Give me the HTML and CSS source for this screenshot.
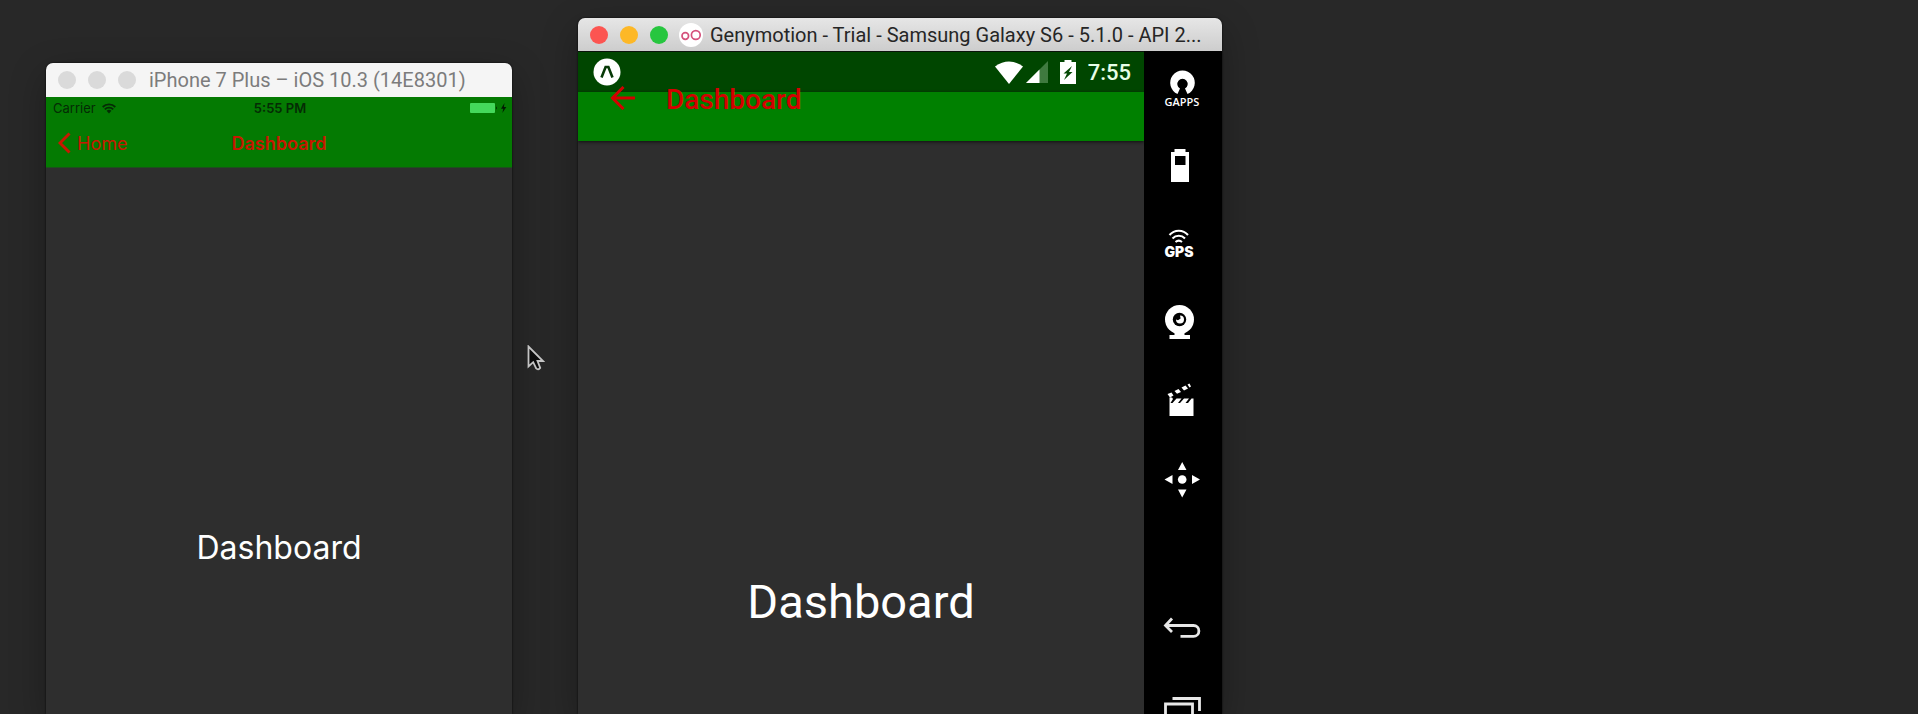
FILE: index.html
```html
<!DOCTYPE html>
<html lang="en">
<head>
<meta charset="utf-8">
<title>Simulators</title>
<link rel="stylesheet" href="styles.css">
</head>
<body>
<main class="desktop">
  <section class="window iphone" aria-label="iPhone simulator">
    <header class="titlebar titlebar-inactive">
      <span class="lights">
        <button class="light" aria-label="Close"></button>
        <button class="light" aria-label="Minimize"></button>
        <button class="light" aria-label="Zoom"></button>
      </span>
      <h1 class="iphone-title">iPhone 7 Plus – iOS 10.3 (14E8301)</h1>
    </header>
    <div class="ios-top">
      <div class="ios-status">
        <span class="carrier">Carrier
          <svg width="14" height="11" viewBox="0 0 14 11" fill="none" stroke="#052b05" stroke-width="1.8"><path d="M.7 4a9 9 0 0 1 12.6 0M2.8 6.3a6 6 0 0 1 8.4 0"/><path d="M4.6 7.8a3.6 3.6 0 0 1 4.800 0L7 10.600z" fill="#052b05" stroke="none"/></svg>
        </span>
        <span class="ios-time">5:55 PM</span>
        <span class="ios-battery">
          <svg width="37" height="12" viewBox="0 0 37 12"><rect x="0" y="1" width="25" height="10" rx="1" fill="#44d95b"/><path d="M26 4.500q2 1.500 0 3z" fill="#052b05"/><path d="M34.500 1 31 6.700h2.300L32.300 11 36.300 5h-2.400z" fill="#031a03"/></svg>
        </span>
      </div>
      <nav class="ios-nav">
        <button class="ios-back">
          <svg width="13" height="22" viewBox="0 0 13 22" fill="none" stroke="#c81800" stroke-width="3"><path d="M11.500 1.500 2 11l9.500 9.500"/></svg>
          Home
        </button>
        <h2 class="ios-heading">Dashboard</h2>
      </nav>
    </div>
    <div class="ios-body"><p class="ios-label">Dashboard</p></div>
  </section>

  <section class="window geny" aria-label="Android emulator">
    <header class="titlebar titlebar-active">
      <span class="lights">
        <button class="light red" aria-label="Close"></button>
        <button class="light yellow" aria-label="Minimize"></button>
        <button class="light green" aria-label="Zoom"></button>
      </span>
      <svg class="geny-logo" width="24" height="24" viewBox="0 0 24 24"><circle cx="12" cy="12" r="12" fill="#fff"/><g fill="none" stroke="#d5527c" stroke-width="1.700"><circle cx="6.300" cy="13" r="3.300"/><circle cx="16.800" cy="12" r="4.400"/></g></svg>
      <h1 class="geny-title">Genymotion - Trial - Samsung Galaxy S6 - 5.1.0 - API 2...</h1>
    </header>
    <div class="geny-main">
      <div class="android">
        <div class="android-status">
          <svg width="28" height="28" viewBox="0 0 28 28"><circle cx="14" cy="14" r="13.500" fill="#fff"/><path d="M8.500 19.500 12.600 9h2.800l4.100 10.500" fill="none" stroke="#083a08" stroke-width="2.600"/></svg>
          <div class="android-icons">
            <svg width="28" height="23" viewBox="0 0 28 23"><path d="M0 5.500Q14-4.500 28 5.500L14 23z" fill="#fff"/></svg>
            <svg width="22" height="22" viewBox="0 0 22 22"><path d="M22 0v22H0z" fill="#3f7a3f"/><path d="M13.500 8.500V22H0z" fill="#fff"/></svg>
            <svg width="16" height="24" viewBox="0 0 16 24"><path d="M4.500 0h7v2H16v22H0V2h4.500z" fill="#fff"/><path d="M12 6 3.500 13.500H7L4 20l8.500-8H9z" fill="#064a06"/></svg>
            <span class="android-time">7:55</span>
          </div>
        </div>
        <nav class="android-bar">
          <button class="android-back" aria-label="Back"><svg width="26" height="24" viewBox="0 0 26 24" fill="none" stroke="#d40000" stroke-width="3"><path d="M25 12H2M13.500 1 2.500 12l11 11"/></svg></button>
          <h2 class="android-heading">Dashboard</h2>
        </nav>
        <div class="android-body"><p class="android-label">Dashboard</p></div>
      </div>
      <aside class="tools">
        <button class="tool" aria-label="Open GAPPS"><svg width="78" height="78" viewBox="0 0 78 78"><path d="M33.500 43A12.300 12.300 0 1 1 43.500 43L41 37.500a5.200 5.200 0 1 0-5 0z" fill="#fff"/><circle cx="38.500" cy="34" r="3" fill="#000"/><text class="gapps-text" x="38" y="55">GAPPS</text></svg></button>
        <button class="tool" aria-label="Battery"><svg width="78" height="78" viewBox="0 0 78 78"><path d="M30.500 20h11v3H45v30H27V23h3.500z" fill="#fff"/><path d="M31 27h10.500v9H31z" fill="#000"/></svg></button>
        <button class="tool" aria-label="GPS"><svg width="78" height="78" viewBox="0 0 78 78"><g fill="none" stroke="#fff" stroke-width="2"><path d="M25.500 28a12 12 0 0 1 18.500 0M28.500 31.500a8.500 8.500 0 0 1 12.500 0M31.500 35a5 5 0 0 1 6.500 0"/></g><text class="gps-text" x="35" y="50">GPS</text></svg></button>
        <button class="tool" aria-label="Camera"><svg width="78" height="78" viewBox="0 0 78 78"><circle cx="35.500" cy="34.500" r="14.500" fill="#fff"/><circle cx="35.500" cy="34.500" r="6.700" fill="#000"/><path d="M36 30.500a4 4 0 1 1-4 4l2 .8 2.600-1.800z" fill="#fff"/><path d="M30.500 47h10v3H46v4H25.500v-4h5z" fill="#fff"/></svg></button>
        <button class="tool" aria-label="Capture"><svg width="78" height="78" viewBox="0 0 78 78"><path d="M25.500 40h24v13h-24z" fill="#fff"/><g fill="#fff"><path d="M25.500 34.500h2.500l1 1.500-2.500 4h-1zM32.500 35.500h5L34 40h-5.500zM40 35.500h5L41.500 40H36zM47.500 35.500h2V40H44zM23.500 31l4-1.500 2 3-3.500 2zM30.500 28l4-2 2.500 3-4 1.800zM37.500 24.500l4-2 2.500 3-4 2zM43.500 21.500l2-1 1.500 3-1.500 1z"/></g></svg></button>
        <button class="tool" aria-label="Move"><svg width="78" height="78" viewBox="0 0 78 78" fill="#fff"><circle cx="38.200" cy="38.500" r="4.300"/><path d="M38.200 21 42.500 29H34zM38.200 56.500 34 48.500h8.500zM20.500 38.500l8-4.500v9zM56 38.500l-8-4.500v9z"/></svg></button>
        <button class="tool tool-back" aria-label="Back"><svg width="78" height="78" viewBox="0 0 78 78" fill="none" stroke="#e8e8e8" stroke-width="2.800"><path d="M22 36.500h27.500a5.400 5.400 0 0 1 0 10.800h-13M28 29.500 21.500 36.500l6.500 6.500"/></svg></button>
        <button class="tool" aria-label="Recent apps"><svg width="78" height="78" viewBox="0 0 78 78" fill="none" stroke="#e8e8e8" stroke-width="2.800"><path d="M28.500 31.500h27v12.500M21.500 37h27v19h-27z"/></svg></button>
      </aside>
    </div>
  </section>

  <svg class="cursor" width="18" height="26" viewBox="0 0 18 26"><path d="M1.500 1.500v20l4.700-4.300 3 6.200q2 2 4-.5L10.500 16H16z" fill="#0b0b0b" stroke="#c4c4c4" stroke-width="1.800"/></svg>
</main>
</body>
</html>
```
FILE: styles.css
```css
* {
  box-sizing: border-box;
}

body {
  margin: 0;
  background: #282828;
  font-family: Inter, "Liberation Sans", sans-serif;
}

h1,
h2,
p {
  margin: 0;
  font-weight: 400;
  white-space: nowrap;
}

button {
  padding: 0;
  border: 0;
  background: none;
  font: inherit;
  color: inherit;
}

svg {
  display: block;
  flex: none;
}

.desktop {
  position: relative;
  min-height: 100vh;
  overflow: hidden;
}

/* Windows are placed freely on the desktop and run past its lower edge. */
.window {
  position: absolute;
  bottom: 0;
  display: flex;
  flex-direction: column;
  overflow: hidden;
  border-radius: 7px 7px 0 0;
  background: #2e2e2e;
  box-shadow: 0 0 2px #000, 0 12px 36px rgba(0, 0, 0, 0.3);
}

.iphone {
  top: 63px;
  left: 46px;
  width: 466px;
}

.geny {
  top: 18px;
  left: 578px;
  width: 644px;
}

.titlebar {
  display: flex;
  flex: none;
  align-items: center;
  height: 34px;
  padding-left: 12px;
}

.titlebar-inactive {
  background: #f5f5f5;
  color: #7c7c7c;
}

.titlebar-active {
  height: 33px;
  background: linear-gradient(#e6e6e6, #cdcdcd);
  color: #262626;
}

.lights {
  display: flex;
  gap: 12px;
}

.light {
  width: 18px;
  height: 18px;
  border-radius: 50%;
  background: #dadada;
}

.red {
  background: #fc5551;
}

.yellow {
  background: #fdb827;
}

.green {
  background: #27c63f;
}

.iphone-title {
  margin-left: 13px;
  font-family: Roboto, sans-serif;
  font-size: 20px;
}

.geny-logo {
  margin-left: 11px;
}

.geny-title {
  margin-left: 7px;
  font-family: Roboto, sans-serif;
  font-size: 20px;
}

.ios-top {
  flex: none;
  background: #047a02;
  border-bottom: 1px solid #1c501c;
}

.ios-status {
  display: grid;
  grid-template-columns: 1fr auto 1fr;
  align-items: center;
  height: 22px;
  padding: 0 5px 0 7px;
  font-size: 13px;
  color: #052b05;
}

.carrier {
  display: flex;
  align-items: center;
  gap: 6px;
}

.ios-time {
  font-weight: 600;
}

.ios-battery {
  justify-self: end;
}

.ios-nav {
  display: grid;
  grid-template-columns: 1fr auto 1fr;
  align-items: center;
  height: 48px;
  padding: 0 12px;
  font-size: 18px;
  color: #c81800;
}

.ios-back {
  display: flex;
  align-items: center;
  gap: 6px;
}

.ios-heading {
  font-size: 18px;
  font-weight: 600;
}

.ios-body,
.android-body {
  display: flex;
  flex: 1;
  justify-content: center;
  color: #fff;
}

.ios-body {
  padding-top: 360px;
}

.ios-label {
  font-size: 32px;
  line-height: 40px;
}

.geny-main {
  display: flex;
  flex: 1;
  min-height: 0;
}

.android {
  display: flex;
  flex: 1;
  flex-direction: column;
  font-family: Roboto, sans-serif;
}

.android-status {
  display: flex;
  flex: none;
  align-items: center;
  justify-content: space-between;
  height: 41px;
  padding: 0 13px 0 15px;
  border-top: 1px solid #0a140a;
  background: #004600;
  color: #e8ffe8;
}

.android-icons {
  display: flex;
  align-items: center;
}

.android-icons svg {
  margin-right: 3px;
}

.android-icons svg + svg {
  margin-right: 12px;
}

.android-time {
  font-size: 22px;
  font-weight: 500;
}

.android-bar {
  display: flex;
  flex: none;
  align-items: flex-start;
  height: 49px;
  padding-left: 32px;
  background: #008000;
  box-shadow: 0 1px 3px #111;
  color: #d40000;
}

.android-back,
.android-heading {
  margin-top: -6px;
}

.android-heading {
  margin-left: 30px;
  font-size: 28px;
  font-weight: 500;
  line-height: 28px;
}

.android-body {
  padding-top: 433px;
}

.android-label {
  font-size: 47px;
  line-height: 56px;
}

.tools {
  display: flex;
  flex: none;
  flex-direction: column;
  width: 78px;
  background: #000;
  overflow: hidden;
}

.tool {
  flex: none;
  height: 78px;
}

.tool-back {
  margin-top: 70px;
}

.tool text {
  fill: #fff;
  text-anchor: middle;
}

.gapps-text {
  font: 600 11px "Open Sans", sans-serif;
}

.gps-text {
  font: 900 14px Inter, sans-serif;
}

.cursor {
  position: absolute;
  top: 345px;
  left: 527px;
}
```
